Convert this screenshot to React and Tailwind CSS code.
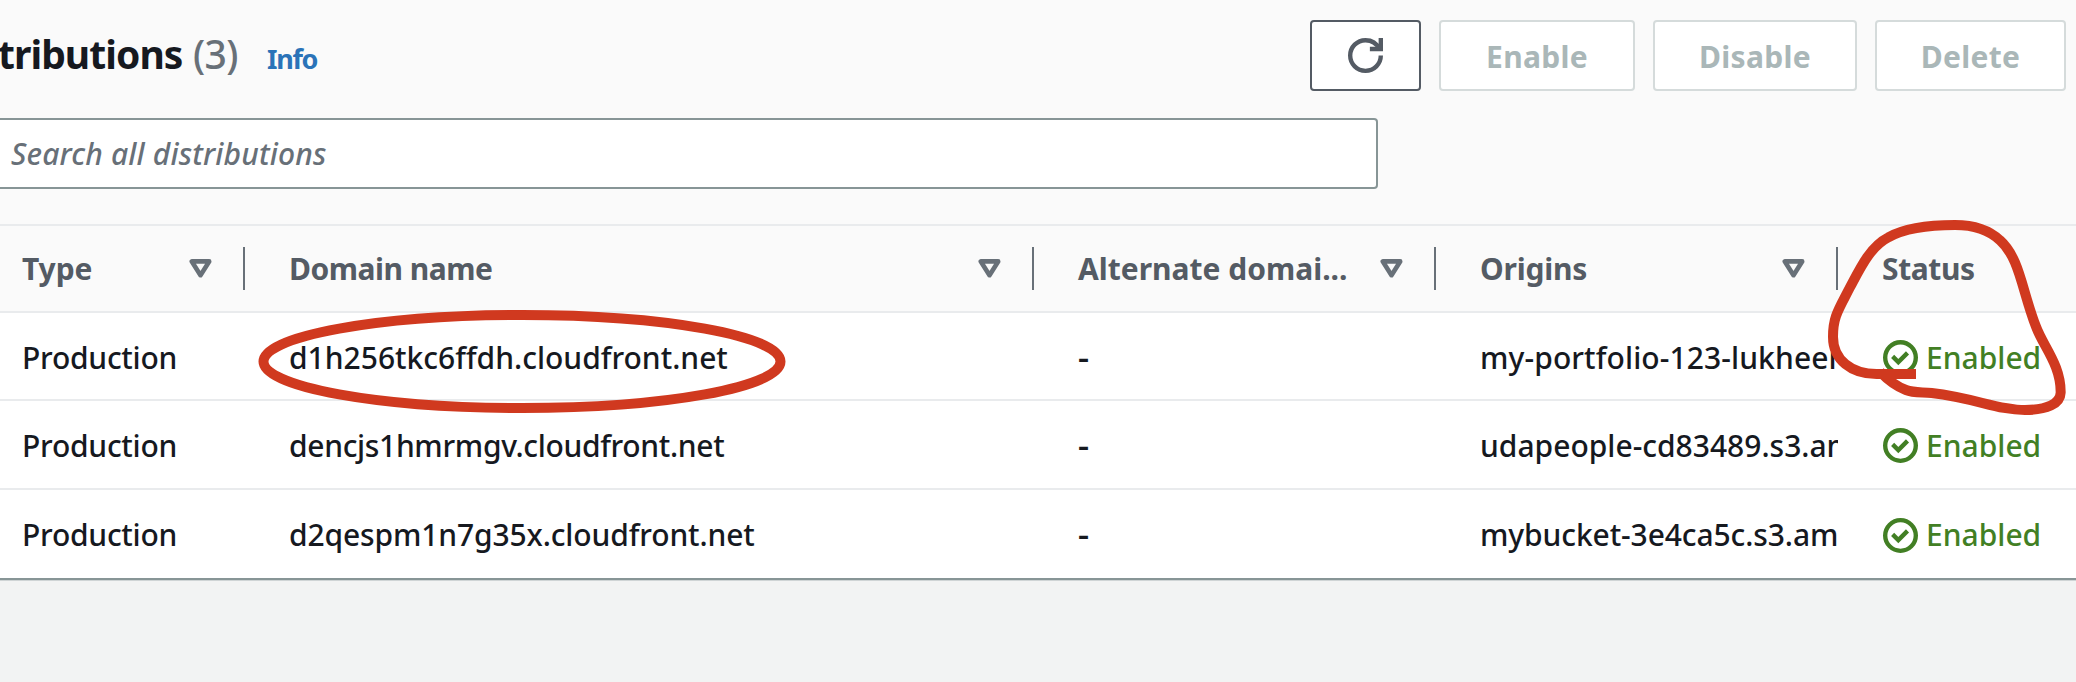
const columns = [
  { label: "Type", cls: "pl-[22px] tracking-[-0.1px]" },
  { label: "Domain name", cls: "pl-[44px] tracking-[-0.5px]" },
  { label: "Alternate domai...", cls: "pl-[44px] tracking-[0px]" },
  { label: "Origins", cls: "pl-[44px] tracking-[-0.2px]" },
];

const rows = [
  { domain: "d1h256tkc6ffdh.cloudfront.net", origin: "my-portfolio-123-lukheer", height: "h-[88px] [&>*]:pt-[3px]", tracking: "tracking-normal", originTracking: "tracking-[0.1px]" },
  { domain: "dencjs1hmrmgv.cloudfront.net", origin: "udapeople-cd83489.s3.am", height: "h-[89px] [&>*]:pt-[2px]", tracking: "tracking-[-0.33px]", originTracking: "tracking-normal" },
  { domain: "d2qespm1n7g35x.cloudfront.net", origin: "mybucket-3e4ca5c.s3.am", height: "h-[88px] [&>*]:pt-[2px]", tracking: "tracking-[-0.13px]", originTracking: "tracking-[-0.1px]" },
];

const grid = "grid grid-cols-[245px_789px_402px_402px_238px]";

function RefreshIcon() {
  return (
    <svg viewBox="0 0 16 16" className="size-[35px] overflow-visible" fill="none" stroke="#545b64" strokeWidth="2">
      <path d="M15 8c0 3.87-3.13 7-7 7s-7-3.13-7-7 3.13-7 7-7c2.79 0 5.2 1.63 6.33 4" />
      <path d="M10 5h5V0" />
    </svg>
  );
}

function SortIcon() {
  return (
    <svg viewBox="0 0 23 19" className="h-[19px] w-[23px] shrink-0" fill="none" stroke="#687078" strokeWidth="4.6" strokeLinejoin="round">
      <path d="M2.8 2.4h17.4L11.5 16.2z" />
    </svg>
  );
}

function CheckIcon() {
  return (
    <svg viewBox="0 0 16 16" className="size-[35px] shrink-0" fill="none" stroke="#427f24" strokeWidth="2">
      <circle cx="8" cy="8" r="7" />
      <path d="m4.4 7.5 2.6 2.6 4.2-4.2" />
    </svg>
  );
}

function DisabledButton({ children, width }) {
  return (
    <button className={`${width} h-[71px] rounded-[4px] border-2 border-[#d5dbdb] bg-white pt-[2px] text-[30px] font-bold tracking-[0.3px] text-[#aab7b8]`}>
      {children}
    </button>
  );
}

export default function App() {
  return (
    <div className="relative flex h-[682px] w-[2076px] flex-col overflow-hidden bg-[#f2f3f3] font-['Noto_Sans',sans-serif] text-[30px] font-medium text-[#16191f]">
      <header className="flex h-[118px] shrink-0 items-start justify-between bg-[#fafafa] pr-[10px] pt-5">
        <div className="flex items-baseline whitespace-nowrap pt-[7px] leading-[54px]">
          <h2 className="-ml-[2px] w-[195px] text-[39px] font-bold tracking-[-0.95px]">tributions</h2>
          <span className="w-[74px] text-[39px] font-medium tracking-[-0.6px] text-[#687078]">(3)</span>
          <a className="text-[27px] font-bold tracking-[-1.3px] text-[#2a73b8]">Info</a>
        </div>
        <div className="flex gap-[18px]">
          <button className="flex h-[71px] w-[111px] items-center justify-center rounded-[4px] border-2 border-[#545b64] bg-white">
            <RefreshIcon />
          </button>
          <DisabledButton width="w-[196px]">Enable</DisabledButton>
          <DisabledButton width="w-[204px]">Disable</DisabledButton>
          <DisabledButton width="w-[191px]">Delete</DisabledButton>
        </div>
      </header>

      <div className="h-[106px] shrink-0 bg-[#fafafa]">
        <div className="flex h-[71px] w-[1378px] items-center rounded-r-[4px] border-2 border-l-0 border-[#879596] bg-white pl-[11px] text-[30px] italic tracking-[0.15px] text-[#687078]">
          Search all distributions
        </div>
      </div>

      <div className={`${grid} h-[89px] shrink-0 border-y-2 border-[#e9ebed] bg-[#fafafa] font-bold text-[#545b64]`}>
        {columns.map((c) => (
          <div key={c.label} className={`${c.cls} flex items-center justify-between whitespace-nowrap`}>
            <span>{c.label}</span>
            <div className="flex items-center gap-[31px]">
              <SortIcon />
              <div className="h-[43px] w-[2px] bg-[#687078]" />
            </div>
          </div>
        ))}
        <div className="flex items-center pl-[44px] tracking-[-0.4px]">Status</div>
      </div>

      {rows.map((r, i) => (
        <div key={r.domain} className={`${grid} ${r.height} ${i < 2 ? "border-b-2 border-[#e9ebed]" : ""} shrink-0 items-center whitespace-nowrap bg-white leading-[44px]`}>
          <div className="pl-[22px] tracking-[-0.25px]">Production</div>
          <div className={`pl-[44px] ${r.tracking}`}>{r.domain}</div>
          <div className="pl-[44px] font-semibold"><span className="inline-block origin-left scale-x-115">-</span></div>
          <div className={`ml-[44px] overflow-hidden ${r.originTracking}`}>{r.origin}</div>
          <div className="flex items-center gap-[8px] pl-[45px] text-[#427f24]">
            <CheckIcon />
            <span>Enabled</span>
          </div>
        </div>
      ))}
      <div className="h-[3px] shrink-0 border-t-2 border-[#879596] bg-[#cfd4d5]" />

      <svg className="pointer-events-none absolute inset-0" width="2076" height="682" fill="none" stroke="#d0391f" strokeWidth="10">
        <ellipse cx="522" cy="361.5" rx="258.5" ry="46.5" />
        <g transform="translate(1780 200) scale(.33333)" strokeWidth="30">
          <path d="M408 522H290C215 522 159 480 159 410C159 350 175 330 210 262C240 206 270 140 325 112C375 84 450 75 525 75C580 75 625 88 660 121C720 175 725 270 768 380C790 440 843 495 842 578C841 612 800 630 735 630C650 630 590 595 455 579C425 576 400 579 378 570C350 559 325 541 300 515" />
        </g>
      </svg>
    </div>
  );
}
